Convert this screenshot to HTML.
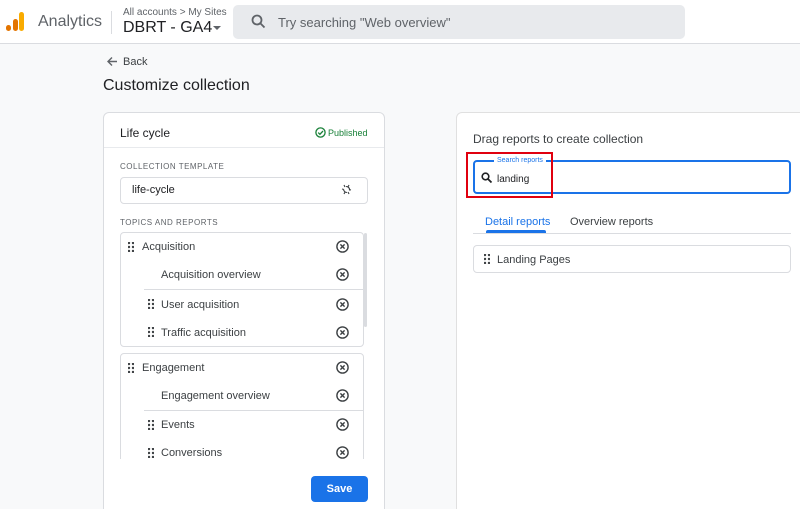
<!DOCTYPE html>
<html><head><meta charset="utf-8"><style>
*{margin:0;padding:0;box-sizing:border-box}
html{width:800px;height:509px;overflow:hidden}
body{width:800px;height:509px;overflow:hidden;background:#f8f9fa;font-family:"Liberation Sans",Arial,sans-serif;color:#3c4043;position:relative}
.a{position:absolute}
.t{position:absolute;white-space:nowrap}
.dots{position:absolute;width:6px;height:10px}
.x{position:absolute;width:13px;height:13px}
</style></head><body>
<svg width="0" height="0" style="position:absolute"><defs>
<g id="d"><circle cx="1" cy="1" r="1.2"/><circle cx="5" cy="1" r="1.2"/><circle cx="1" cy="5" r="1.2"/><circle cx="5" cy="5" r="1.2"/><circle cx="1" cy="9" r="1.2"/><circle cx="5" cy="9" r="1.2"/></g>
<g id="xx"><circle cx="6.5" cy="6.5" r="5.6" fill="none" stroke="#3c4043" stroke-width="1.4"/><path d="M4.4 4.4L8.6 8.6M8.6 4.4L4.4 8.6" stroke="#3c4043" stroke-width="1.4"/></g>
</defs></svg>
<!-- header -->
<div class="a" style="left:0;top:0;width:800px;height:44px;background:#fff;border-bottom:1px solid #dadce0"></div>
<div class="a" style="left:6px;top:25px;width:5px;height:6px;border-radius:3px;background:#e37400"></div>
<div class="a" style="left:13px;top:19px;width:5px;height:12px;border-radius:3px;background:#e37400"></div>
<div class="a" style="left:19px;top:12px;width:5px;height:19px;border-radius:3px;background:#f9ab00"></div>
<div class="t" style="left:38px;top:13px;font-size:16px;color:#5f6368">Analytics</div>
<div class="a" style="left:111px;top:11px;width:1px;height:23px;background:#dadce0"></div>
<div class="t" style="left:123px;top:7px;font-size:10px;color:#5f6368">All accounts &gt; My Sites</div>
<div class="t" style="left:123px;top:19px;font-size:16px;color:#202124">DBRT - GA4</div>
<div class="a" style="left:213px;top:26px;border-left:4px solid transparent;border-right:4px solid transparent;border-top:4px solid #5f6368"></div>
<div class="a" style="left:233px;top:5px;width:452px;height:34px;background:#e8eaed;border-radius:5px"></div>
<svg class="a" style="left:251px;top:14px" width="15" height="15"><circle cx="6" cy="6" r="4.5" fill="none" stroke="#5f6368" stroke-width="1.8"/><path d="M9.3 9.3L13.5 13.5" stroke="#5f6368" stroke-width="1.8"/></svg>
<div class="t" style="left:278px;top:15px;font-size:13px;color:#5f6368">Try searching "Web overview"</div>
<!-- back -->
<svg class="a" style="left:106px;top:56px" width="12" height="11"><path d="M11 5.5H2M6 1.5L2 5.5L6 9.5" fill="none" stroke="#5f6368" stroke-width="1.4"/></svg>
<div class="t" style="left:123px;top:56px;font-size:11px;color:#3c4043">Back</div>
<div class="t" style="left:103px;top:77px;font-size:16px;color:#202124">Customize collection</div>
<!-- left card -->
<div class="a" style="left:103px;top:112px;width:282px;height:405px;background:#fff;border:1px solid #dadce0;border-radius:6px"></div>
<div class="t" style="left:120px;top:126px;font-size:12px;color:#202124">Life cycle</div>
<svg class="a" style="left:315px;top:127px" width="11" height="11"><circle cx="5.5" cy="5.5" r="4.6" fill="none" stroke="#188038" stroke-width="1.3"/><path d="M3.2 5.6L4.9 7.3L8 4" fill="none" stroke="#188038" stroke-width="1.3"/></svg>
<div class="t" style="left:328px;top:128px;font-size:9px;color:#188038">Published</div>
<div class="a" style="left:104px;top:147px;width:280px;height:1px;background:#e8eaed"></div>
<div class="t" style="left:120px;top:162px;font-size:8px;letter-spacing:.5px;color:#5f6368">COLLECTION TEMPLATE</div>
<div class="a" style="left:120px;top:177px;width:248px;height:27px;border:1px solid #dadce0;border-radius:4px"></div>
<div class="t" style="left:132px;top:184px;font-size:11px;color:#202124">life-cycle</div>
<svg class="a" style="left:340px;top:183px" width="13" height="13"><path d="M4 2L5 4M9 2L8 4M2 6L4 6.5M11 7L9 6.5M4 11L5 9M9 11L8 9M6 3.5C8 3.5 10 5 9.5 7.5M7 9.5C5 9.5 3.5 8 3.5 6" fill="none" stroke="#3c4043" stroke-width="1.1"/></svg>
<div class="t" style="left:120px;top:218px;font-size:8px;letter-spacing:.5px;color:#5f6368">TOPICS AND REPORTS</div>
<div class="a" style="left:120px;top:232px;width:244px;height:115px;border:1px solid #dadce0;border-radius:4px"></div>
<div class="a" style="left:364px;top:233px;width:3px;height:94px;background:#dadce0;border-radius:2px"></div>
<div class="a" style="left:120px;top:353px;width:244px;height:120px;border:1px solid #dadce0;border-radius:4px"></div>
<div class="a" style="left:104px;top:459px;width:280px;height:15px;background:#fff"></div>
<div class="a" style="left:144px;top:289px;width:219px;height:1px;background:#dadce0"></div>
<div class="a" style="left:144px;top:410px;width:219px;height:1px;background:#dadce0"></div>
<svg class="dots" style="left:128px;top:242px" fill="#3c4043"><use href="#d"/></svg>
<div class="t" style="left:142px;top:241px;font-size:11px">Acquisition</div>
<div class="t" style="left:161px;top:269px;font-size:11px">Acquisition overview</div>
<svg class="dots" style="left:148px;top:299px" fill="#3c4043"><use href="#d"/></svg>
<div class="t" style="left:161px;top:299px;font-size:11px">User acquisition</div>
<svg class="dots" style="left:148px;top:327px" fill="#3c4043"><use href="#d"/></svg>
<div class="t" style="left:161px;top:327px;font-size:11px">Traffic acquisition</div>
<svg class="dots" style="left:128px;top:363px" fill="#3c4043"><use href="#d"/></svg>
<div class="t" style="left:142px;top:362px;font-size:11px">Engagement</div>
<div class="t" style="left:161px;top:390px;font-size:11px">Engagement overview</div>
<svg class="dots" style="left:148px;top:420px" fill="#3c4043"><use href="#d"/></svg>
<div class="t" style="left:161px;top:419px;font-size:11px">Events</div>
<svg class="dots" style="left:148px;top:448px" fill="#3c4043"><use href="#d"/></svg>
<div class="t" style="left:161px;top:447px;font-size:11px">Conversions</div>
<svg class="x" style="left:336px;top:240px"><use href="#xx"/></svg>
<svg class="x" style="left:336px;top:268px"><use href="#xx"/></svg>
<svg class="x" style="left:336px;top:298px"><use href="#xx"/></svg>
<svg class="x" style="left:336px;top:326px"><use href="#xx"/></svg>
<svg class="x" style="left:336px;top:361px"><use href="#xx"/></svg>
<svg class="x" style="left:336px;top:389px"><use href="#xx"/></svg>
<svg class="x" style="left:336px;top:418px"><use href="#xx"/></svg>
<svg class="x" style="left:336px;top:446px"><use href="#xx"/></svg>
<div class="a" style="left:311px;top:476px;width:57px;height:26px;background:#1a73e8;border-radius:4px;color:#fff;font-size:11px;font-weight:bold;text-align:center;line-height:26px">Save</div>
<!-- right card -->
<div class="a" style="left:456px;top:112px;width:360px;height:405px;background:#fff;border:1px solid #e0e0e0;border-radius:6px"></div>
<div class="t" style="left:473px;top:132px;font-size:12px;color:#3c4043">Drag reports to create collection</div>
<div class="a" style="left:473px;top:160px;width:318px;height:34px;border:2px solid #1a73e8;border-radius:4px"></div>
<div class="t" style="left:494px;top:157px;font-size:7px;color:#1a73e8;background:#fff;padding:0 3px">Search reports</div>
<svg class="a" style="left:481px;top:172px" width="12" height="12"><circle cx="4.5" cy="4.5" r="3.3" fill="none" stroke="#202124" stroke-width="1.6"/><path d="M7 7L10.5 10.5" stroke="#202124" stroke-width="1.8"/></svg>
<div class="t" style="left:497px;top:174px;font-size:10px;color:#202124">landing</div>
<div class="a" style="left:466px;top:152px;width:87px;height:46px;border:2px solid #e0000f"></div>
<div class="t" style="left:485px;top:216px;font-size:11px;color:#1a73e8">Detail reports</div>
<div class="t" style="left:570px;top:216px;font-size:11px;color:#3c4043">Overview reports</div>
<div class="a" style="left:473px;top:233px;width:318px;height:1px;background:#dadce0"></div>
<div class="a" style="left:486px;top:230px;width:60px;height:3px;background:#1a73e8;border-radius:2px 2px 0 0"></div>
<div class="a" style="left:473px;top:245px;width:318px;height:28px;border:1px solid #dadce0;border-radius:4px"></div>
<svg class="dots" style="left:484px;top:254px" fill="#3c4043"><use href="#d"/></svg>
<div class="t" style="left:497px;top:254px;font-size:11px;color:#3c4043">Landing Pages</div>
</body></html>
